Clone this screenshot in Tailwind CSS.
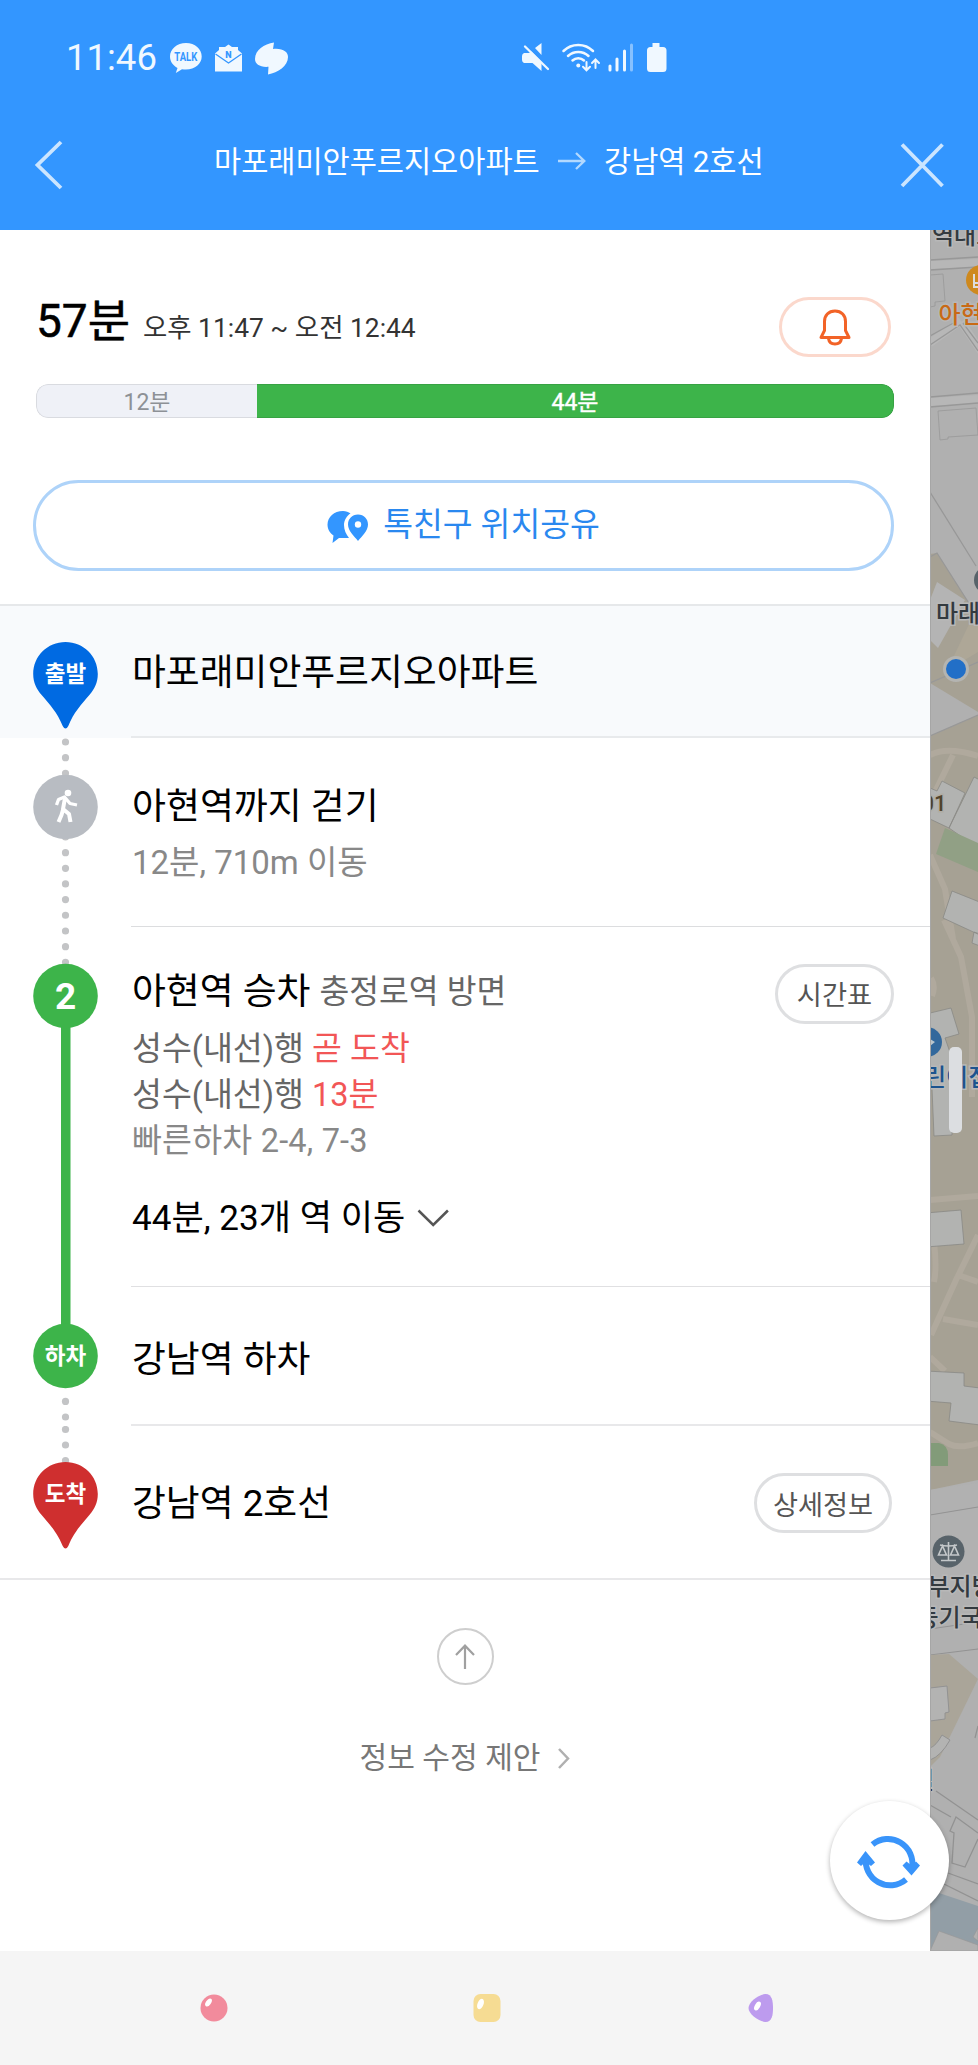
<!DOCTYPE html>
<html lang="ko">
<head>
<meta charset="utf-8">
<title>길찾기</title>
<script src="https://cdn.jsdelivr.net/npm/@tailwindcss/browser@4"></script>
</head>
<body class="w-[978px] h-[2065px] overflow-hidden bg-white text-black whitespace-nowrap font-['Roboto','Noto_Sans_CJK_KR',sans-serif]">

<!-- Header -->
<header class="h-[230px] bg-[#3396ff] text-white">
  <div class="h-[116px] flex items-center pl-[66px]">
    <span class="text-[36.500px] leading-[40px] w-[104px] text-[#f0f8ff]">11:46</span>
    <svg class="w-[120px] h-[36px]" viewBox="170 40 120 36" fill="#f0f8ff">
      <path d="M186 43c-9 0-16 6-16 13.500c0 5 3 9 7.500 11.500l-1.700 5 6.200-3.800c1.300.2 2.600.3 4 .3c9 0 15.700-5.800 15.700-13s-6.700-13.500-15.700-13.500z"/>
      <text x="174.300" y="61" font-size="12" font-weight="700" fill="#3396ff" textLength="23" lengthAdjust="spacingAndGlyphs">TALK</text>
      <path d="M215 53.500l4-3.500v-3h6l3.500-2.500 3.500 2.500h6v3l4 3.500v18h-27z"/>
      <path d="M215.500 54l13 9 13-9" fill="none" stroke="#3396ff" stroke-width="1.300"/>
      <text x="228.500" y="58" font-size="9" font-weight="900" text-anchor="middle" fill="#3396ff">N</text>
      <path d="M274 42.500L273 49C283 48 288 52 288 57C288 66 278 72.500 268 74.500L268.500 66.800C260 67.500 255 64 255 59C255 50 264 44 274 42.500z"/>
    </svg>
    <svg class="w-[150px] h-[32px] ml-[231px]" viewBox="521 42 150 32" fill="none" stroke="#f0f8ff" stroke-width="2.300" stroke-linecap="round">
      <path d="M524 53h5l2.500-1.500L541.500 62v9l-9-8H524q-2-1-2-3v-4q0-2 2-3zM535 48l6.500-5v12z" fill="#f0f8ff" stroke="none"/>
      <path d="M525 46.500L548 69"/>
      <path d="M563.500 51a21 21 0 0 1 29.500 0M568 56a15 15 0 0 1 20.500 0M572.500 60.500a8.500 8.500 0 0 1 11.500 0" stroke-width="2.500"/>
      <circle cx="578.300" cy="65.500" r="2" fill="#f0f8ff" stroke="none"/>
      <path d="M586.500 62v8m-3.500-3.200l3.500 3.500 3.500-3.500M595.500 68v-8m-3.500 3l3.500-3.500 3.500 3.500" stroke-width="2"/>
      <path d="M610 66v4M617 59v11M624.500 51v19" stroke-width="3"/>
      <path d="M631.500 45v25" stroke="#87c1ff" stroke-width="3"/>
      <path d="M652.500 43h7v4h3.500q3.500 0 3.500 3.500v18q0 3.500-3.500 3.500h-12.500q-3.500 0-3.500-3.500v-18q0-3.500 3.500-3.500h2z" fill="#f0f8ff" stroke="none"/>
    </svg>
  </div>
  <div class="h-[98px] flex items-center">
    <svg class="w-[40px] h-[60px] ml-[30px]" viewBox="30 135 40 60" fill="none" stroke="#cbe5ff" stroke-width="3.800"><path d="M61 142L37.500 165 61 188"/></svg>
    <span class="ml-[144px] w-[343px] text-[29.500px] leading-[40px] -mt-[6px]">마포래미안푸르지오아파트</span>
    <svg class="w-[30px] h-[20px] -mt-[8px]" viewBox="556 151 30 20" fill="none" stroke="#b3d9ff" stroke-width="2.300"><path d="M557 161h26M575 153l8.300 8-8.300 8"/></svg>
    <span class="ml-[17px] w-[290px] text-[29.500px] leading-[40px] -mt-[6px]">강남역 2호선</span>
    <svg class="w-[60px] h-[60px] -ml-[2px]" viewBox="892 135 60 60" fill="none" stroke="#cbe5ff" stroke-width="3.800"><path d="M902 144.500L942.500 186M942.500 144.500L902 186"/></svg>
  </div>
</header>

<main class="flex h-[1721px] relative">
  <section class="w-[930px] shrink-0">
    <!-- Summary -->
    <div class="h-[374px] flex flex-col">
      <div class="flex h-[60px] mt-[67px] pl-[36px] pr-[39px]">
        <div class="flex items-baseline grow leading-[50px] -mt-[1px]">
          <span class="text-[46px] w-[107px] leading-[50px] [-webkit-text-stroke:0.5px_#000]">57분</span>
          <span class="text-[26.400px] text-[#333]">오후 11:47 ~ 오전 12:44</span>
        </div>
        <button class="w-[112px] h-[60px] rounded-full border-[3px] border-[#fbd8cc] flex items-center justify-center">
          <svg class="w-[34px] h-[40px]" viewBox="818 307 34 40" fill="none" stroke="#f26327" stroke-width="3" stroke-linejoin="round"><path d="M835 311c-6.500 0-10.500 4.500-10.500 10.500v9l-3.500 7h28l-3.500-7v-9c0-6-4-10.500-10.500-10.500zM828.500 338.500c.5 3.500 3 5.500 6.500 5.500s6-2 6.500-5.500"/></svg>
        </button>
      </div>
      <div class="flex h-[34px] mt-[27px] ml-[36px] w-[858px] rounded-[12px] overflow-hidden text-[23px] leading-[34px] text-center">
        <div class="w-[221px] bg-[#eff1f7] text-[#8d9196] border border-r-0 border-[#d9dbe0] rounded-l-[12px] leading-[35px]">12분</div>
        <div class="grow bg-[#3db44a] text-white border border-l-0 border-[#37a243] rounded-r-[12px] leading-[35px] [-webkit-text-stroke:0.4px_#fff]">44분</div>
      </div>
      <button class="flex items-center justify-center h-[91px] w-[861px] mt-[62px] ml-[33px] rounded-full border-[3px] border-[#aed3f9] text-[32.400px] leading-[40px] text-[#2a88ef]">
        <svg class="w-[42px] h-[34px] mr-[14px] mt-[2px]" viewBox="327 511 42 34">
          <path d="M343 512c-9 0-15.500 6-15.500 13.500c0 5 2.500 8.500 6 11l-1 7.500 6.500-5h10c-3-4-5-8-5-13s3-9.500 6.500-11.500c-2-1.500-4.500-2.500-7.500-2.500z" fill="#3396ff"/>
          <path d="M358 515.500c-6 0-10 4.500-10 10c0 6.500 6 11.500 10 16.500c4-5 10-10 10-16.500c0-5.500-4-10-10-10z" fill="#3396ff"/>
          <circle cx="358" cy="525.500" r="3.200" fill="#fff"/>
        </svg>
        <span class="-mt-[1px]">톡친구 위치공유</span>
      </button>
    </div>

    <!-- Route steps -->
    <ol>
      <li class="flex h-[134px] bg-[#f8fafc] border-t-2 border-[#e6e8ea]">
        <svg class="w-[131px] h-[132px] shrink-0" viewBox="0 606 131 132">
          <path d="M65.500 642c-18 0-32.300 14-32.300 32c0 9 3.500 15 8 20.500c9 10.500 16 18 21.500 31.500q2.800 5 5.600 0c5.500-13.500 12.500-21 21.500-31.500c4.500-5.500 8-11.500 8-20.500c0-18-14.300-32-32.300-32z" fill="#006ae2"/>
          <text x="65.500" y="681.500" font-size="22.500" font-weight="700" text-anchor="middle" fill="#fff">출발</text>
        </svg>
        <div class="grow border-b-2 border-[#e8eaec] pt-[47px] pl-[1px] text-[36.800px] leading-[40px]">마포래미안푸르지오아파트</div>
      </li>
      <li class="flex h-[189px]">
        <svg class="w-[131px] h-[189px] shrink-0" viewBox="0 738 131 189">
          <path d="M65.500 742v32M65.500 837v128" fill="none" stroke="#c3c4c6" stroke-width="7.200" stroke-linecap="round" stroke-dasharray="0 15.650"/>
          <circle cx="65.500" cy="807" r="32.300" fill="#b8bcc2"/>
          <g fill="none" stroke="#fff" stroke-width="4" stroke-linejoin="round"><path d="M56.500 805l2-5.500 6-2.500 5.500 6.500 7 1.500" stroke-width="3.300"/><path d="M65 798l-2 11 6 5 1.500 8M63.500 808l-2 7-3 7"/></g>
          <circle cx="68" cy="793" r="3.300" fill="#fff"/>
        </svg>
        <div class="grow border-b border-[#dcdddf] pt-[49px] pl-[1px]">
          <p class="text-[36.900px] leading-[40px]">아현역까지 걷기</p>
          <p class="mt-[16px] text-[33px] leading-[40px] text-[#888]">12분, 710m 이동</p>
        </div>
      </li>
      <li class="flex h-[360px]">
        <svg class="w-[131px] h-[360px] shrink-0" viewBox="0 927 131 360">
          <path d="M65.500 931v32" fill="none" stroke="#c3c4c6" stroke-width="7.200" stroke-linecap="round" stroke-dasharray="0 15.650"/>
          <path d="M61 1000h9.500v287H61z" fill="#3db44a"/>
          <circle cx="65.500" cy="996" r="32.300" fill="#3db44a"/>
          <text x="65.500" y="1009" font-size="37" font-weight="700" text-anchor="middle" fill="#fff">2</text>
        </svg>
        <div class="grow border-b border-[#e0e0e2] pt-[45px] pl-[1px] flex justify-between pr-[36px]">
          <div>
            <p class="text-[36.800px] leading-[40px] flex gap-[9px]"><span>아현역 승차</span><span class="text-[32.400px] text-[#666]">충정로역 방면</span></p>
            <div class="mt-[14px] text-[32.500px] leading-[46px] text-[#666]">
              <p>성수(내선)행 <span class="text-[#f25656]">곧 도착</span></p>
              <p>성수(내선)행 <span class="text-[#f25656]">13분</span></p>
              <p class="text-[#888] tracking-[0.200px]">빠른하차 2-4, 7-3</p>
            </div>
            <p class="mt-[34px] text-[35.100px] leading-[40px] flex items-center">44분, 23개 역 이동
              <svg class="w-[32px] h-[20px] ml-[12px]" viewBox="417 1208 32 20" fill="none" stroke="#555" stroke-width="2.500"><path d="M418.500 1210.500l14.700 14.500 14.700-14.500"/></svg>
            </p>
          </div>
          <button class="w-[119px] h-[60px] -mt-[8px] rounded-full border-[3px] border-[#dedfe1] text-[27.300px] leading-[57px] pt-[1px] text-[#555]">시간표</button>
        </div>
      </li>
      <li class="flex h-[139px]">
        <svg class="w-[131px] h-[139px] shrink-0" viewBox="0 1287 131 139">
          <path d="M61 1287h9.500v45H61z" fill="#3db44a"/>
          <circle cx="65.500" cy="1356" r="32.300" fill="#3db44a"/>
          <text x="65.500" y="1363.500" font-size="22.500" font-weight="700" text-anchor="middle" fill="#fff">하차</text>
          <g fill="#c3c4c6"><circle cx="65.500" cy="1401.400" r="3.600"/><circle cx="65.500" cy="1417" r="3.600"/></g>
        </svg>
        <div class="grow border-b-2 border-[#e8e8ea] pt-[53px] pl-[1px] text-[36.800px] leading-[40px]">강남역 하차</div>
      </li>
      <li class="flex h-[154px] border-b-2 border-[#e8e8ea]">
        <svg class="w-[131px] h-[152px] shrink-0" viewBox="0 1426 131 152">
          <g fill="#c3c4c6"><circle cx="65.500" cy="1429.500" r="3.600"/><circle cx="65.500" cy="1445" r="3.600"/><circle cx="65.500" cy="1460.500" r="3.600"/></g>
          <path d="M65.500 1462c-18 0-32.300 14-32.300 32c0 9 3.500 15 8 20.500c9 10.500 16 18 21.500 31.500q2.800 5 5.600 0c5.500-13.500 12.500-21 21.500-31.500c4.500-5.500 8-11.500 8-20.500c0-18-14.300-32-32.300-32z" fill="#cf2f2f"/>
          <text x="65.500" y="1501.500" font-size="22.500" font-weight="700" text-anchor="middle" fill="#fff">도착</text>
        </svg>
        <div class="grow flex justify-between pl-[1px] pr-[38px]">
          <span class="pt-[58px] text-[36.800px] leading-[40px]">강남역 2호선</span>
          <button class="w-[138px] h-[60px] mt-[47px] rounded-full border-[3px] border-[#dedfe1] text-[27.200px] leading-[57px] pt-[2px] text-[#555]">상세정보</button>
        </div>
      </li>
    </ol>

    <div class="flex flex-col items-center mt-[48px]">
      <button class="w-[57px] h-[57px] rounded-full border-2 border-[#cecece] flex items-center justify-center">
        <svg class="w-[24px] h-[28px]" viewBox="453 1643 24 28" fill="none" stroke="#a0a0a0" stroke-width="2.200"><path d="M465 1669v-23M456 1655l9-9.300 9 9.300"/></svg>
      </button>
      <button class="flex items-center mt-[53px] text-[30.100px] leading-[40px] text-[#777]">
        <span>정보 수정 제안</span>
        <svg class="w-[14px] h-[22px] ml-[16px]" viewBox="557 1746 14 22" fill="none" stroke="#b0b0b0" stroke-width="2.500"><path d="M559 1748l9 9.500-9 9.500"/></svg>
      </button>
    </div>
  </section>

  <!-- Dimmed map strip -->
  <svg class="w-[48px] h-[1721px] shrink-0" viewBox="930 230 48 1721">
    <rect x="930" y="230" width="48" height="1721" fill="#b0b0b0"/>
    <path d="M930 736L978 715V1480L930 1490zM930 554l7-1L978 617v95L930 683z" fill="#a6a194"/>
    <path d="M930 600l7-18 28 18-27 48-8-8z" fill="#b4b4b4"/>
    <path d="M952 660l20-42 6-6v40l-30 18z" fill="#aea797"/>
    <g fill="none" stroke="#b7b7b7" stroke-width="8"><path d="M930 265l48-2M930 343l31-22M961 322l22 32M930 402l48-3"/></g>
    <g fill="none" stroke="#989898" stroke-width="1.300">
      <path d="M930 260l48-3M930 270l48-3M930 336l27-15M930 345l30-20 18 26M963 323l15 20M930 397l48-4M930 407l48-4"/>
      <path d="M930 275l13-1 2 27-10 1v4l-5 1M938 411l38-3 2 27-30 2v2l-8 1z" stroke-width=".8"/>
      <path d="M930 492l46 74M930 557l7-4 40 63M930 683l48-21M930 736l48-21"/>
    </g>
    <!-- apartment blocks -->
    <path d="M930 755q17-9 48 1M953 755l-18 37M930 855l15 34 8 50M944 920l17 37 11 60v80M931 978q5 8 1 18M930 1200l48-4M978 1235l-22 45-25 55M958 1275l20 7M943 1319l35 6M930 1357l15 14M930 1432l19 12q10 5 29-1M934 1242q3 25 0 40" fill="none" stroke="#b0a99d" stroke-width="6"/>
    <g fill="#b2b3b1" stroke="#898985" stroke-width=".8">
      <path d="M930 788l7 3 5-10 23 12-16 35-19-9zM974 777l8 4v70l-33-23zM952 891l30 12v33l-39-18zM974 932l6 2v12l-8-3z"/>
      <path d="M926 1014l25-6 8 26-14 4 7 20v77l-18 1-2-47-6-50zM926 1213l35-3 3 34-38 3zM926 1371l38 2v13l16 2v37l-31-4 2-18-25-2z"/>
    </g>
    <path d="M945 828l33 15v29l-42-18z" fill="#91a085"/>
    <path d="M930 1443h9q9 2 9 12v11h-18z" fill="#829b79"/>
    <path d="M930 1490l48-7v102h-48z" fill="#b1b1b1"/>
    <path d="M930 1515l48-8M930 1655l48-6M930 1629l48-7" fill="none" stroke="#929292" stroke-width="1"/>
    <path d="M930 1655l19-1 29 25-38 78-10 10z" fill="#aaa599"/>
    <path d="M930 1688l17-2 2 26-4 1v6l-15 2M930 1748q6-2 12-13l8 5q-9 16-20 20" fill="#b3b3b2" stroke="#929292" stroke-width="1"/>
    <path d="M936 1791l42 29M930 1805l21 12M978 1833l-22-16-6 14 4 2-2 30 13 4 13-28M978 1726l-3 12M948 1873l30 11M930 1877l48 24" fill="none" stroke="#929292" stroke-width="1.300"/>
    <path d="M930 1890l48 16v45h-48z" fill="#929ea6"/>
    <path d="M930 1951l9-20 39 14v6zM978 1928l-5 9 5 4z" fill="#b0b0b0" stroke="#989898" stroke-width=".7"/>
    <!-- places -->
    <g font-size="24" font-weight="500" fill="#333a3f" stroke="#b8b8b8" stroke-width="3" paint-order="stroke">
      <text x="932" y="244">역대로</text>
      <text x="938.500" y="323" fill="#c96a15">아현역</text>
      <text x="936" y="622">마래푸</text>
      <text x="946.500" y="810.500" font-size="22" text-anchor="end" fill="#51432c" stroke="#b0ada4">101</text>
      <text x="924" y="1086" fill="#1c538e">린이집</text>
      <text x="927.500" y="1594.500">부지방</text>
      <text x="916.500" y="1625.500">등기국</text>
      <text x="912" y="1789" fill="#2b211d">빌</text>
    </g>
    <circle cx="981" cy="280" r="15" fill="#ce891e"/><path d="M974 274v13h8M974 283h5" fill="none" stroke="#ddd" stroke-width="2"/>
    <circle cx="988" cy="580" r="14" fill="#58636a"/>
    <circle cx="956" cy="669" r="13" fill="#b4b4b1"/><circle cx="956" cy="669" r="10" fill="#226fc7"/>
    <circle cx="927" cy="1042" r="15" fill="#32689c"/><path d="M927 1036l3 3 5 3-5 4-3 3z" fill="#bbc6cc"/>
    <circle cx="948.500" cy="1551.500" r="16" fill="#58636a"/>
    <path d="M948.500 1542v18M941 1560.500h15M940 1545q8 2 17 0M942.500 1546l-4 9h8zM954.500 1546l-4 9h8z" fill="none" stroke="#c4c8ca" stroke-width="1.600"/>
    <rect x="949" y="1047" width="13" height="86" rx="5" fill="#dcdee1"/>
    <path d="M930.500 230v1721" stroke="#a6a6a6" stroke-width="1"/>
  </svg>

  <!-- Floating refresh button -->
  <button class="absolute left-[830px] top-[1571px] w-[119px] h-[119px] rounded-full bg-white shadow-[0_2px_5px_rgba(0,0,0,0.3)]">
    <svg class="w-[119px] h-[119px]" viewBox="830 1801 119 119" fill="none" stroke="#3994fa" stroke-width="6">
      <path d="M872.500 1844.500A24.500 24.500 0 0 1 912 1868M906 1879.500A24.500 24.500 0 0 1 866 1857"/>
      <path d="M902.500 1865.500l4-4 5 4 4.500-4 4 4-8.500 10zM857 1862.500l8.500-11.500 9.500 11.500-4 3.500-5.500-4-4.500 4z" fill="#3994fa" stroke="none"/>
    </svg>
  </button>
</main>

<!-- System navigation -->
<nav class="h-[114px] bg-[#f5f5f5] flex pt-[42px]">
  <svg class="w-[28px] h-[30px] ml-[200px]" viewBox="0 0 28 30"><circle cx="14" cy="15" r="13.500" fill="#f28b9c"/><ellipse cx="8.500" cy="9.500" rx="2.500" ry="4.500" transform="rotate(35 8.500 9.500)" fill="#fff"/></svg>
  <svg class="w-[28px] h-[30px] ml-[245px]" viewBox="0 0 28 30"><rect x=".5" y="1" width="27" height="28" rx="7" fill="#f6dc93"/><ellipse cx="7.500" cy="11" rx="3" ry="5.500" transform="rotate(22 7.500 11)" fill="#fff"/></svg>
  <svg class="w-[26px] h-[30px] ml-[247px]" viewBox="0 0 26 30"><path d="M17 1C10 2 .5 9 .5 15S10 28 17 29c7 .5 8-7 8-14S24 .5 17 1z" fill="#bd9bee"/><ellipse cx="9.500" cy="13" rx="2.700" ry="4.800" transform="rotate(30 9.500 13)" fill="#fff"/></svg>
</nav>
</body>
</html>
